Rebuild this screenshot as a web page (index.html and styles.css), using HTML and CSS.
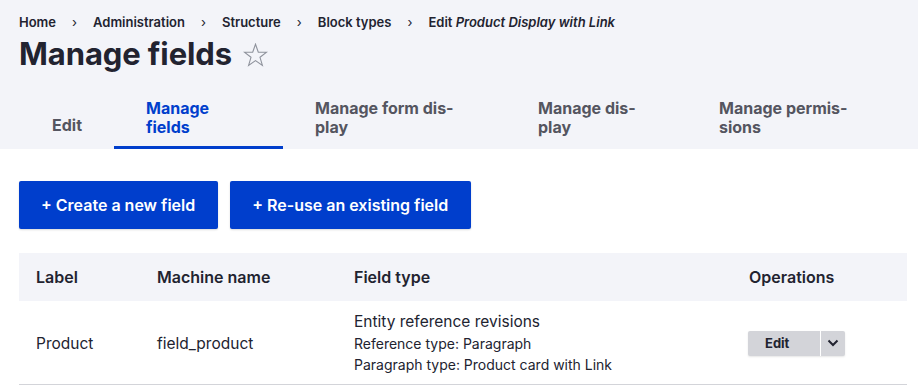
FILE: index.html
```html
<!DOCTYPE html>
<html lang="en">
<head>
<meta charset="utf-8">
<title>Manage fields</title>
<link rel="stylesheet" href="styles.css">
</head>
<body>
<header class="page-header">
  <nav class="breadcrumb">
    <a href="#">Home</a><span class="sep">›</span>
    <a href="#">Administration</a><span class="sep">›</span>
    <a href="#">Structure</a><span class="sep">›</span>
    <a href="#">Block types</a><span class="sep">›</span>
    <a href="#">Edit <em>Product Display with Link</em></a>
  </nav>
  <div class="title-row">
    <h1 class="page-title">Manage fields</h1>
    <svg class="star" width="25" height="24" viewBox="0 0 25 24" aria-hidden="true">
      <path d="M12.5 1.2 L15.3 9.1 L23.6 9.2 L17 14.3 L19.4 22.4 L12.5 17.6 L5.6 22.4 L8 14.3 L1.4 9.2 L9.7 9.1 Z" fill="none" stroke="#8e929c" stroke-width="1.1" stroke-linejoin="miter"/>
    </svg>
  </div>
  <ul class="tabs">
    <li class="tab tab-edit"><a href="#">Edit</a></li>
    <li class="tab tab-fields is-active"><a href="#">Manage<br>fields</a></li>
    <li class="tab tab-form"><a href="#">Manage form dis-<br>play</a></li>
    <li class="tab tab-display"><a href="#">Manage dis-<br>play</a></li>
    <li class="tab tab-perms"><a href="#">Manage permis-<br>sions</a></li>
  </ul>
</header>
<main class="content">
  <div class="actions">
    <a class="button" href="#">+ Create a new field</a>
    <a class="button" href="#">+ Re-use an existing field</a>
  </div>
  <table class="fields-table">
    <colgroup>
      <col class="col-label">
      <col class="col-machine">
      <col class="col-type">
      <col class="col-ops">
    </colgroup>
    <thead>
      <tr>
        <th>Label</th>
        <th>Machine name</th>
        <th>Field type</th>
        <th>Operations</th>
      </tr>
    </thead>
    <tbody>
      <tr>
        <td>Product</td>
        <td>field_product</td>
        <td class="type-cell">
          <div class="type-name">Entity reference revisions</div>
          <div class="type-meta">Reference type: Paragraph</div>
          <div class="type-meta">Paragraph type: Product card with Link</div>
        </td>
        <td>
          <div class="dropbutton">
            <a class="dropbutton-main" href="#">Edit</a>
            <span class="dropbutton-toggle">
              <svg width="12" height="8" viewBox="0 0 12 8" aria-hidden="true"><path d="M1.5 1.5 L6 6 L10.5 1.5" fill="none" stroke="#222330" stroke-width="2"/></svg>
            </span>
          </div>
        </td>
      </tr>
    </tbody>
  </table>
</main>
</body>
</html>
```
FILE: styles.css
```css
* { box-sizing: border-box; }
html, body { margin: 0; padding: 0; }
body {
  font-family: Inter, "Noto Sans", sans-serif;
  color: #222330;
  background: #fff;
  width: 918px;
  height: 386px;
  overflow: hidden;
}
a { color: inherit; text-decoration: none; }

.page-header {
  background: #f3f4f9;
  padding: 12px 0 0 19px;
}
.breadcrumb {
  font-size: 13px;
  line-height: 20px;
  font-weight: 600;
  color: #222330;
  display: flex;
  align-items: center;
}
.breadcrumb em { font-style: italic; }
.breadcrumb .sep {
  font-weight: 400;
  margin: 0 16px;
  font-size: 13px;
}
.title-row {
  display: flex;
  align-items: center;
  height: 44px;
}
.page-title {
  margin: 0;
  font-size: 31px;
  font-weight: 700;
  line-height: 44px;
  letter-spacing: -0.1px;
}
.star {
  margin-left: 11px;
  margin-top: 2px;
}
.tabs {
  list-style: none;
  margin: 17px 0 0 0;
  padding: 0;
  display: grid;
  grid-template-columns: 95px 169px 223px 181px 1fr;
  height: 56px;
}
.tab {
  display: flex;
  align-items: flex-end;
  padding: 0 0 9px 32px;
  font-size: 16px;
  font-weight: 700;
  line-height: 19px;
  color: #545560;
  border-bottom: 3px solid transparent;
}
.tab-edit { padding-left: 33px; padding-bottom: 11px; }
.tab.is-active {
  color: #003ecc;
  border-bottom-color: #003ecc;
}

.content {
  padding: 32px 11px 0 19px;
}
.actions {
  display: flex;
  gap: 12px;
}
.button {
  display: inline-flex;
  align-items: center;
  height: 48px;
  padding: 0 23px 0 22px;
  background: #003ecc;
  color: #fff;
  font-size: 16px;
  font-weight: 600;
  border-radius: 2px;
  box-shadow: 0 1px 2px rgba(0, 0, 0, 0.15);
}
.fields-table {
  margin-top: 24px;
  width: 888px;
  border-collapse: collapse;
  table-layout: fixed;
}
.col-label { width: 121px; }
.col-machine { width: 197px; }
.col-type { width: 395px; }
.col-ops { width: 175px; }
.fields-table th {
  background: #f3f4f9;
  height: 48px;
  text-align: left;
  font-size: 16px;
  font-weight: 600;
  padding: 0 17px;
}
.fields-table td {
  font-size: 15.5px;
  padding: 10px 17px 9px;
  vertical-align: middle;
  border-bottom: 1px solid #d3d4d9;
}
.type-name {
  line-height: 22px;
}
.type-meta {
  font-size: 14px;
  line-height: 21px;
}
.dropbutton {
  display: inline-flex;
  height: 25px;
  margin-left: -1px;
  background: #d3d4d9;
  border-radius: 2px;
  box-shadow: 0 1px 2px rgba(0, 0, 0, 0.1);
}
.dropbutton-main {
  width: 73px;
  display: flex;
  align-items: center;
  padding-left: 17px;
  font-size: 13px;
  font-weight: 700;
  color: #222330;
  border-right: 1px solid #fff;
}
.dropbutton-toggle {
  width: 24px;
  display: flex;
  align-items: center;
  justify-content: center;
}
```
